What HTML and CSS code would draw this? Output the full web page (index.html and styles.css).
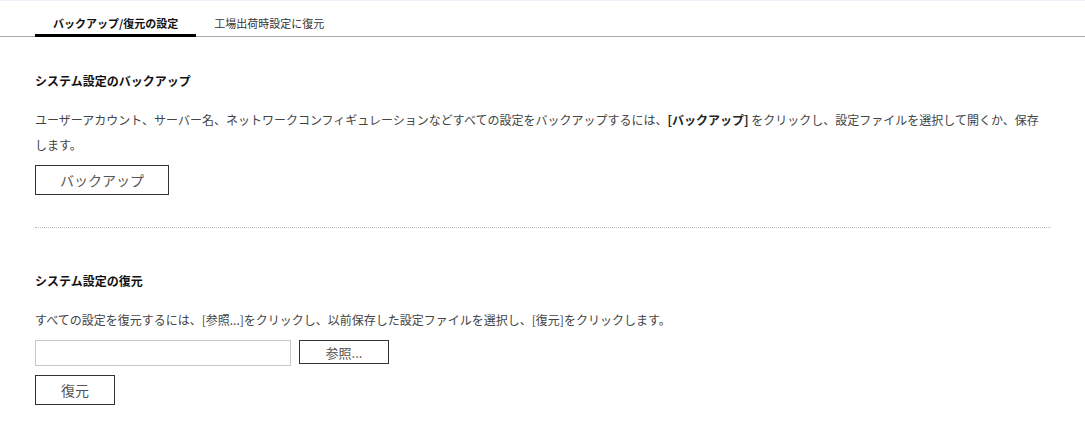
FILE: index.html
```html
<html lang="ja">
  <head>
    <meta charset="UTF-8">
    <title>バックアップ/復元の設定</title>
    <link rel="stylesheet" href="styles.css">
  </head>
  <body>
    <nav class="tabs">
      <a class="tab active">バックアップ/復元の設定</a>
      <a class="tab">工場出荷時設定に復元</a>
    </nav>

    <main class="content">
      <section class="block">
        <h2 class="title">システム設定のバックアップ</h2>
        <p class="desc desc-narrow">ユーザーアカウント、サーバー名、ネットワークコンフィギュレーションなどすべての設定をバックアップするには、<b>[バックアップ]</b> をクリックし、設定ファイルを選択して開くか、保存します。</p>
        <button class="btn btn-wide">バックアップ</button>
      </section>

      <hr class="sep">

      <section class="block block-restore">
        <h2 class="title">システム設定の復元</h2>
        <p class="desc">すべての設定を復元するには、[参照...]をクリックし、以前保存した設定ファイルを選択し、[復元]をクリックします。</p>
        <div class="file-row">
          <input class="file-name" type="text">
          <button class="btn btn-browse">参照...</button>
        </div>
        <button class="btn btn-restore">復元</button>
      </section>
    </main>
  </body>
</html>
```

FILE: styles.css
```css
* {
  margin: 0;
  padding: 0;
  box-sizing: border-box;
}

body {
  font-family: "Noto Sans CJK JP", "Noto Sans", sans-serif;
  color: #333;
  background-color: #fff;
  border-top: 1px solid #eef3fb;
}

.tabs {
  display: flex;
  height: 36px;
  padding-left: 35px;
  border-bottom: 1px solid #aaa;
}

.tab {
  height: 36px;
  margin-bottom: -1px;
  padding: 14px 18px 0;
  font-size: 11px;
  line-height: 16px;
  color: #333;
  border-bottom: 3px solid transparent;
  white-space: nowrap;
}

.tab.active {
  font-weight: bold;
  color: #111;
  border-bottom-color: #000;
}

.content {
  padding: 0 34px 0 35px;
}

.block {
  padding-top: 36px;
}

.block-restore {
  padding-top: 45px;
}

.title {
  font-size: 12px;
  line-height: 16px;
  font-weight: bold;
  color: #111;
}

.desc {
  margin-top: 18px;
  font-size: 12px;
  line-height: 25px;
  color: #444;
}

.desc-narrow {
  padding-right: 8px;
}

.desc b {
  color: #222;
}

.btn {
  display: block;
  background-color: #fff;
  border: 1px solid #333;
  color: #555;
  font-family: inherit;
  cursor: pointer;
}

.btn-wide {
  width: 134px;
  height: 30px;
  margin-top: 8px;
  font-size: 14px;
}

.sep {
  margin-top: 32px;
  border: none;
  border-top: 1px dotted #bbb;
}

.file-row {
  display: flex;
  gap: 8px;
  margin-top: 8px;
}

.file-name {
  width: 256px;
  height: 26px;
  border: 1px solid #c8c8c8;
  outline: none;
}

.btn-browse {
  width: 90px;
  height: 24px;
  font-size: 13px;
}

.btn-restore {
  width: 80px;
  height: 30px;
  margin-top: 9px;
  font-size: 14px;
}
```
